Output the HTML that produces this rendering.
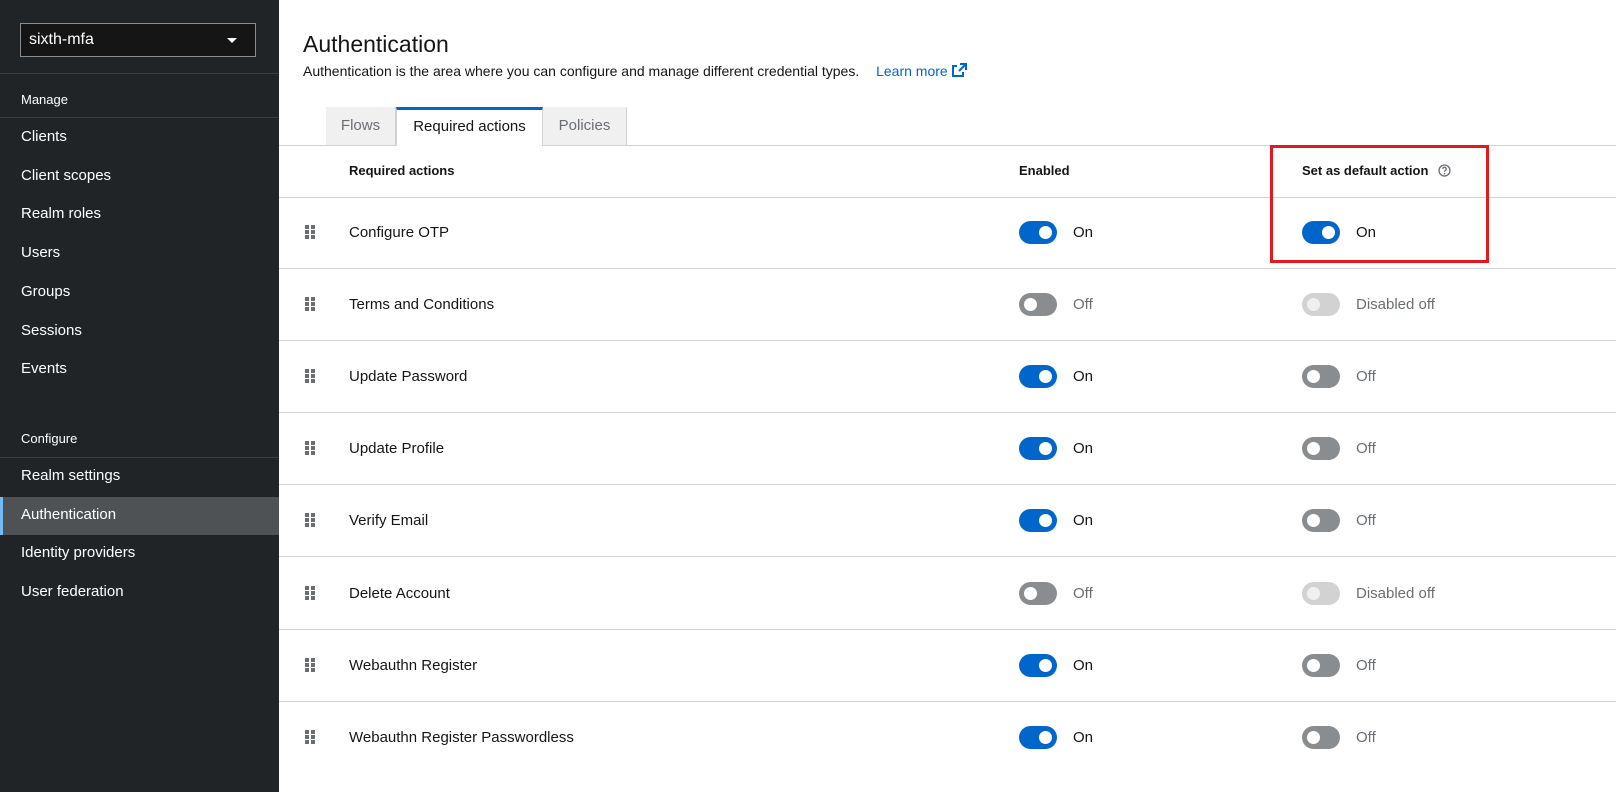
<!DOCTYPE html>
<html><head><meta charset="utf-8"><style>
*{box-sizing:border-box;margin:0;padding:0}
body{width:1616px;height:792px;overflow:hidden;font-family:"Liberation Sans",sans-serif;background:#fff;color:#151515;position:relative}
.sb{position:absolute;left:0;top:0;width:279px;height:792px;background:#212427;color:#fff}
.dd{position:absolute;left:20px;top:23px;width:236px;height:34px;border:1px solid #8a8d90;background:#151515;font-size:16px;padding:7px 8px}
.dd:after{content:"";position:absolute;right:18px;top:14px;border-left:5px solid transparent;border-right:5px solid transparent;border-top:5px solid #fff}
.hr{position:absolute;left:0;width:279px;height:1px;background:#3c3f42}
.it{position:absolute;left:21px;font-size:15px;line-height:20px}
.sm{font-size:13px}
.act{position:absolute;left:0;top:497px;width:279px;height:38px;background:#4f5255;border-left:3px solid #73bcf7}
h1{position:absolute;left:303px;top:31px;font-size:23px;font-weight:normal}
.desc{position:absolute;left:303px;top:63px;font-size:14px}
.desc a{color:#06c;text-decoration:none;margin-left:13px}
.tab{position:absolute;top:107px;height:38px;background:#f0f0f0;font-size:15px;color:#6a6e73;padding-top:10px;text-align:center;border-right:1px solid #d2d2d2}
.line{position:absolute;left:279px;right:0;height:1px;background:#d2d2d2}
.th{position:absolute;top:163px;font-size:13px;font-weight:bold}
.name{position:absolute;left:349px;font-size:15px}
.grip{position:absolute;left:305px;width:10px;height:14px}
.tg{position:absolute;width:38px;height:23px;border-radius:12px}
.tg:after{content:"";position:absolute;top:5px;width:13px;height:13px;border-radius:50%;background:#fff}
.on{background:#06c}.on:after{right:5px}
.off{background:#8a8d90}.off:after{left:5px}
.dis{background:#d2d2d2}.dis:after{left:5px;background:#f0f0f0}
.lb{position:absolute;font-size:15px}
.g{color:#6a6e73}
</style></head><body>
<div class="sb">
<div class="dd">sixth-mfa</div>
<div class="hr" style="top:73px"></div>
<div class="it sm" style="top:90px">Manage</div>
<div class="hr" style="top:117px"></div>
<div class="it" style="top:127px">Clients</div>
<div class="it" style="top:166px">Client scopes</div>
<div class="it" style="top:204px">Realm roles</div>
<div class="it" style="top:243px">Users</div>
<div class="it" style="top:282px">Groups</div>
<div class="it" style="top:321px">Sessions</div>
<div class="it" style="top:359px">Events</div>
<div class="it sm" style="top:429px">Configure</div>
<div class="hr" style="top:457px"></div>
<div class="it" style="top:466px">Realm settings</div>
<div class="act"></div>
<div class="it" style="top:505px">Authentication</div>
<div class="it" style="top:543px">Identity providers</div>
<div class="it" style="top:582px">User federation</div>
</div>
<h1>Authentication</h1>
<div class="desc">Authentication is the area where you can configure and manage different credential types. <a>Learn more <svg width="15" height="14" viewBox="0 0 15 14" style="vertical-align:-1px"><path d="M8 1h6v6M14 1L7 8M11 9v4H1V3h4" fill="none" stroke="#06c" stroke-width="2"/></svg></a></div>
<div class="line" style="top:145px"></div>
<div class="tab" style="left:326px;width:70px">Flows</div>
<div class="tab" style="left:396px;width:147px;background:#fff;color:#151515;border-top:3px solid #06c;padding-top:8px;height:39px;border-left:1px solid #d2d2d2">Required actions</div>
<div class="tab" style="left:543px;width:84px">Policies</div>
<div class="th" style="left:349px">Required actions</div>
<div class="th" style="left:1019px">Enabled</div>
<div class="th" style="left:1302px">Set as default action <svg width="13" height="13" viewBox="0 0 13 13" style="vertical-align:-2px;margin-left:6px"><circle cx="6.5" cy="6.5" r="5.5" fill="none" stroke="#6a6e73" stroke-width="1.3"/><path d="M4.8 5a1.7 1.7 0 1 1 2.4 1.5c-.6.3-.7.6-.7 1.2" fill="none" stroke="#6a6e73" stroke-width="1.3"/><circle cx="6.5" cy="9.6" r=".8" fill="#6a6e73"/></svg></div>
<div class="line" style="top:197px"></div>
<div style="position:absolute;left:1270px;top:145px;width:219px;height:118px;border:3px solid #e3191f"></div>
<div id="rows"></div>
<script>
var R=[["Configure OTP",1,"on"],["Terms and Conditions",0,"dis"],["Update Password",1,"off"],["Update Profile",1,"off"],["Verify Email",1,"off"],["Delete Account",0,"dis"],["Webauthn Register",1,"off"],["Webauthn Register Passwordless",1,"off"]];
var h="";
R.forEach(function(r,i){var c=232+i*72.1;
h+='<div class="name" style="top:'+(c-8)+'px">'+r[0]+'</div>';
h+='<svg class="grip" style="top:'+(c-7)+'px" viewBox="0 0 10 14"><g fill="#6a6e73"><rect x="0" y="0" width="4" height="4"/><rect x="6" y="0" width="4" height="4"/><rect x="0" y="5" width="4" height="4"/><rect x="6" y="5" width="4" height="4"/><rect x="0" y="10" width="4" height="4"/><rect x="6" y="10" width="4" height="4"/></g></svg>';
h+='<div class="tg '+(r[1]?'on':'off')+'" style="left:1019px;top:'+(c-11)+'px"></div>';
h+='<div class="lb '+(r[1]?'':'g')+'" style="left:1073px;top:'+(c-8)+'px">'+(r[1]?'On':'Off')+'</div>';
h+='<div class="tg '+r[2]+'" style="left:1302px;top:'+(c-11)+'px"></div>';
h+='<div class="lb '+(r[2]=='on'?'':'g')+'" style="left:1356px;top:'+(c-8)+'px">'+(r[2]=='on'?'On':r[2]=='off'?'Off':'Disabled off')+'</div>';
if(i<7)h+='<div class="line" style="top:'+Math.round(c+36)+'px"></div>';
});
document.getElementById("rows").innerHTML=h;
</script>
</body></html>
